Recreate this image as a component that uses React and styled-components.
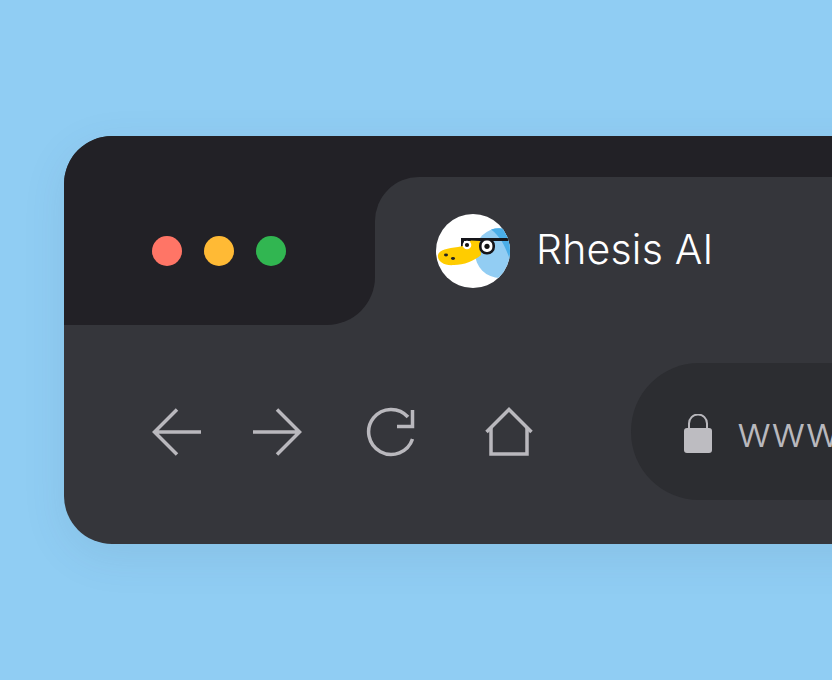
import React from "react";
import styled, { createGlobalStyle } from "styled-components";

const Global = createGlobalStyle`
  html, body { margin: 0; padding: 0; width: 832px; height: 680px; overflow: hidden; background: #90cdf3; }
`;

const Page = styled.div`
  width: 832px;
  height: 680px;
  overflow: hidden;
  padding: 136px 0 0 64px;
  box-sizing: border-box;
  font-family: Inter, "Liberation Sans", sans-serif;
`;

const Browser = styled.div`
  width: 900px;
  height: 408px;
  background: #35363b;
  border-radius: 48px;
  overflow: hidden;
  box-shadow: 0 12px 44px rgba(60, 90, 120, 0.1);
`;

const TitleBar = styled.div`
  display: grid;
  grid-template-columns: 311px 1fr;
  height: 189px;
`;

const Controls = styled.div`
  background: #222126;
  border-bottom-right-radius: 48px;
  padding: 41px 0 0 88px;
  display: flex;
  align-items: center;
  gap: 22px;
`;

const Dot = styled.span`
  width: 30px;
  height: 30px;
  border-radius: 50%;
  background: ${(p) => p.$color};
`;

const TabTrack = styled.div`
  background: #222126;
  padding-top: 41px;
`;

const Tab = styled.div`
  height: 148px;
  background: #35363b;
  border-top-left-radius: 44px;
  padding-left: 61px;
  display: flex;
  align-items: center;
  gap: 26px;
  box-sizing: border-box;
`;

const TabTitle = styled.span`
  color: #fff;
  font-size: 41px;
  font-weight: 350;
  letter-spacing: 0.2px;
  line-height: 1;
  margin-top: -4px;
`;

const Toolbar = styled.div`
  display: flex;
  align-items: center;
  height: 219px;
  padding: 0 0 6px 88px;
  box-sizing: border-box;
`;

const Nav = styled.button`
  background: none;
  border: 0;
  padding: 0;
  width: 50px;
  height: 50px;
  margin-right: ${(p) => p.$gap}px;
  color: #b9b8bd;
  display: block;
  svg { display: block; }
`;

const Address = styled.div`
  margin-left: 97px;
  width: 400px;
  height: 137px;
  background: #2c2d31;
  border-radius: 68px;
  display: flex;
  align-items: center;
  gap: 26px;
  padding-left: 53px;
  box-sizing: border-box;
  flex-shrink: 0;
`;

const LockIcon = styled.svg`
  display: block;
  margin-top: 4px;
`;

const Url = styled.span`
  color: #b9b8bd;
  font-size: 42px;
  font-weight: 350;
  line-height: 1;
  margin-left: -1px;
`;

const Logo = () => (
  <svg width="74" height="74" viewBox="0 0 74 74">
    <defs>
      <clipPath id="disc"><circle cx="37" cy="37" r="37" /></clipPath>
    </defs>
    <circle cx="37" cy="37" r="37" fill="#fff" />
    <g clipPath="url(#disc)">
      <circle cx="64" cy="39" r="25" fill="#92cdf3" />
      <path d="M55 15.500a25 25 0 0 1 19 1.500v29C70 34 65 23 55 15.500z" fill="#4aaee8" />
      <path d="M25 25.500H74" stroke="#15151a" strokeWidth="3" />
      <path d="M26.500 24v10" stroke="#15151a" strokeWidth="3" />
      <path d="M2 41C3 36 12 34 22 33c7-1 10-4 13-6.500l9 .5 1 14c-7 6-17 10-27 10C8 52 1 47 2 41z" fill="#ffcc00" />
      <ellipse cx="10" cy="41" rx="2" ry="1.400" fill="#222" />
      <ellipse cx="17" cy="44.500" rx="2" ry="1.400" fill="#222" />
      <circle cx="31" cy="31" r="4.300" fill="#fff" />
      <circle cx="31" cy="31" r="2.100" fill="#111" />
      <rect x="44.300" y="25.300" width="13.400" height="14" rx="6.300" fill="#fff" stroke="#15151a" strokeWidth="2.600" />
      <circle cx="51" cy="32.300" r="2.600" fill="#111" />
    </g>
  </svg>
);

const Back = () => (
  <svg width="50" height="50" viewBox="0 0 50 50" fill="none" stroke="currentColor" strokeWidth="3.500">
    <path d="M3 25h46M25 2.500 2.500 25 25 47.500" />
  </svg>
);

const Forward = () => (
  <svg width="50" height="50" viewBox="0 0 50 50" fill="none" stroke="currentColor" strokeWidth="3.500">
    <path d="M1 25h46M25 2.500 47.500 25 25 47.500" />
  </svg>
);

const Reload = () => (
  <svg width="50" height="50" viewBox="0 0 50 50" fill="none" stroke="currentColor" strokeWidth="3.500">
    <path d="M46.500 32A22.500 22.500 0 1 1 42 10" />
    <path d="M46.500 3v16.500H31" />
  </svg>
);

const Home = () => (
  <svg width="50" height="50" viewBox="0 0 50 50" fill="none" stroke="currentColor" strokeWidth="3.500">
    <path d="M2.500 25 25 2.500 47.500 25" />
    <path d="M7 21v26h36V21" />
  </svg>
);

const Lock = () => (
  <LockIcon width="28" height="39" viewBox="0 0 28 39">
    <path d="M5 15V9.500a9 9 0 0 1 18 0V15" fill="none" stroke="#b9b8bd" strokeWidth="2" />
    <rect x="0" y="14" width="28" height="25" rx="3" fill="#bdbcc1" />
  </LockIcon>
);

export default function App() {
  return (
    <Page>
      <Global />
      <Browser>
        <TitleBar>
          <Controls>
            <Dot $color="#ff7566" />
            <Dot $color="#ffba35" />
            <Dot $color="#31b651" />
          </Controls>
          <TabTrack>
            <Tab>
              <Logo />
              <TabTitle>Rhesis AI</TabTitle>
            </Tab>
          </TabTrack>
        </TitleBar>
        <Toolbar>
          <Nav $gap={50}><Back /></Nav>
          <Nav $gap={64}><Forward /></Nav>
          <Nav $gap={68}><Reload /></Nav>
          <Nav $gap={0}><Home /></Nav>
          <Address>
            <Lock />
            <Url>www</Url>
          </Address>
        </Toolbar>
      </Browser>
    </Page>
  );
}
